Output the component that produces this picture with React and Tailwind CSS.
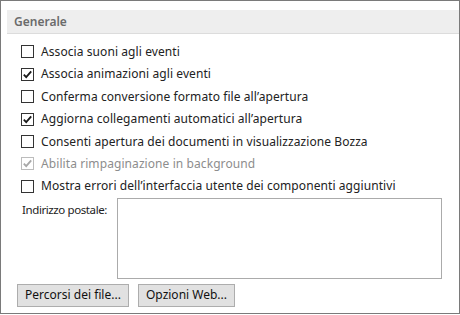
import React from "react";

const items = [
  { label: "Associa suoni agli eventi", checked: false },
  { label: "Associa animazioni agli eventi", checked: true },
  { label: "Conferma conversione formato file all’apertura", checked: false },
  { label: "Aggiorna collegamenti automatici all’apertura", checked: true },
  { label: "Consenti apertura dei documenti in visualizzazione Bozza", checked: false },
  { label: "Abilita rimpaginazione in background", checked: true, disabled: true },
  { label: "Mostra errori dell’interfaccia utente dei componenti aggiuntivi", checked: false },
];

function Box({ checked, disabled }) {
  return (
    <span
      className={
        "flex h-[13px] w-[13px] shrink-0 items-center justify-center border bg-white " +
        (disabled ? "border-[#bcbcbc]" : "border-[#333333]")
      }
    >
      {checked && (
        <svg width="11" height="11" viewBox="0 0 11 11">
          <path
            d="M1.8 5.6 L4.2 8.2 L9.2 2.4"
            fill="none"
            stroke={disabled ? "#a8a8a8" : "#1a1a1a"}
            strokeWidth="1.8"
          />
        </svg>
      )}
    </span>
  );
}

export default function App() {
  return (
    <div
      className="flex h-[314px] w-[460px] flex-col border border-[#7a7a7a] bg-white text-[12px] text-[#222222]"
      style={{ fontFamily: '"Noto Sans", "Open Sans", sans-serif' }}
    >
      <div className="ml-[6px] mt-[9px] flex h-[24px] items-center border-b border-[#dcdcdc] bg-[#eeeeee] pl-[7px] text-[12px] font-semibold text-[#6b6b6b]">
        Generale
      </div>
      <div className="mt-[6.8px] flex flex-col pl-[20px]">
        {items.map((it) => (
          <div key={it.label} className="flex h-[22.4px] items-center gap-[7px]">
            <Box checked={it.checked} disabled={it.disabled} />
            <span className={"tracking-[0.08px] " + (it.disabled ? "text-[#8d8d8d]" : "")}>{it.label}</span>
          </div>
        ))}
      </div>
      <div className="flex pl-[21px]">
        <div className="w-[95px] shrink-0 whitespace-nowrap pt-[3px] text-[11.5px] tracking-[-0.4px]">Indirizzo postale:</div>
        <div className="h-[81px] w-[325px] border border-[#ababab] bg-white"></div>
      </div>
      <div className="mt-[5px] flex gap-[9px] pl-[16px]">
        <button className="flex h-[23px] w-[112px] items-center justify-center border border-[#adadad] bg-[#e1e1e1] text-[#111111]">
          Percorsi dei file...
        </button>
        <button className="flex h-[23px] w-[97px] items-center justify-center border border-[#adadad] bg-[#e1e1e1] text-[#111111]">
          Opzioni Web...
        </button>
      </div>
    </div>
  );
}
